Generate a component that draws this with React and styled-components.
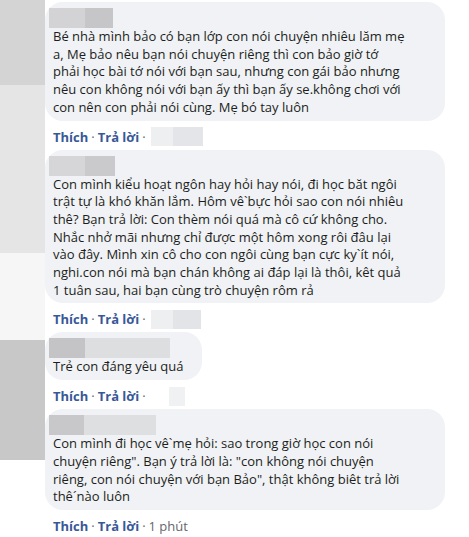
import React from 'react';
import styled, { createGlobalStyle } from 'styled-components';

const GlobalStyle = createGlobalStyle`
  html, body {
    margin: 0;
    padding: 0;
    background: #ffffff;
  }
`;

const Page = styled.div`
  display: flex;
  width: 469px;
  height: 537px;
  overflow: hidden;
  background: #ffffff;
  font-family: 'Open Sans', 'Noto Sans', sans-serif;
`;

// blurred avatar column on the left
const AvatarStrip = styled.div`
  display: flex;
  flex-direction: column;
  width: 45px;
  flex-shrink: 0;
`;

const Tile = styled.div`
  height: ${(p) => p.$h}px;
  width: ${(p) => (p.$w ? `${p.$w}px` : '100%')};
  background: ${(p) => p.$c};
  flex-shrink: 0;
`;

const Thread = styled.div`
  display: flex;
  flex-direction: column;
  align-items: flex-start;
  padding-top: 2px;
`;

const Comment = styled.div`
  display: flex;
  flex-direction: column;
  align-items: flex-start;
`;

const Bubble = styled.div`
  background: #f0f2f5;
  border-radius: 18px;
  padding: 6px 8px 4px;
  width: ${(p) => p.$w}px;
  box-sizing: border-box;
`;

const Author = styled.div`
  display: flex;
  height: 20px;
  margin-left: -4px;
`;

const Body = styled.div`
  font-size: 13px;
  line-height: 17.7px;
  color: #1c1e21;
  white-space: nowrap;
`;

const Actions = styled.div`
  display: flex;
  align-items: center;
  height: 16px;
  margin: 8px 0 5px 8px;
  font-size: 13px;
  font-weight: 700;
  color: #385898;
`;

const Dot = styled.span`
  color: #65676b;
  font-weight: 400;
  margin: 0 3px;
`;

const Time = styled.span`
  color: #65676b;
  font-weight: 400;
`;

const Blur = styled.div`
  display: flex;
  height: 19px;
  margin-left: ${(p) => p.$offset || 2}px;
`;

const comments = [
  {
    width: 400,
    author: [
      [36, '#d3d3d5'],
      [28, '#c6c6c8'],
    ],
    lines: [
      'Bé nhà mình bảo có bạn lớp con nói chuyện nhiêu lăm mẹ',
      'a, Mẹ bảo nêu bạn nói chuyện riêng thì con bảo giờ tớ',
      'phải học bài tớ nói với bạn sau, nhưng con gái bảo nhưng',
      'nêu con không nói với bạn ấy thì bạn ấy se.không chơi với',
      'con nên con phải nói cùng. Mẹ bó tay luôn',
    ],
    blur: [
      [22, '#eeeff1'],
      [30, '#e3e5e8'],
    ],
  },
  {
    width: 400,
    author: [
      [36, '#d6d6d8'],
      [30, '#cacacc'],
    ],
    lines: [
      'Con mình kiểu hoạt ngôn hay hỏi hay nói, đi học băt ngôi',
      'trật tự là khó khăn lắm. Hôm vê`bực hỏi sao con nói nhiêu',
      'thê? Bạn trả lời: Con thèm nói quá mà cô cứ không cho.',
      'Nhắc nhở mãi nhưng chỉ được một hôm xong rôi đâu lại',
      'vào đây. Mình xin cô cho con ngôi cùng bạn cực ky`ít nói,',
      'nghi.con nói mà bạn chán không ai đáp lại là thôi, kêt quả',
      '1 tuân sau, hai bạn cùng trò chuyện rôm rả',
    ],
    blur: [
      [22, '#eeeff1'],
      [28, '#e2e4e7'],
    ],
  },
  {
    width: 157,
    author: [
      [36, '#c4c4c6'],
      [85, '#dddee0'],
    ],
    lines: ['Trẻ con đáng yêu quá'],
    blur: [[16, '#f0f1f3']],
    blurOffset: 20,
  },
  {
    width: 400,
    author: [
      [35, '#c8c8ca'],
      [72, '#dedfe1'],
    ],
    lines: [
      'Con mình đi học vê`mẹ hỏi: sao trong giờ học con nói',
      'chuyện riêng". Bạn ý trả lời là: "con không nói chuyện',
      'riêng, con nói chuyện với bạn Bảo", thật không biêt trả lời',
      'thê´nào luôn',
    ],
    time: '1 phút',
  },
];

export default function App() {
  return (
    <>
      <GlobalStyle />
      <Page>
        <AvatarStrip>
          <Tile $h={85} $c="#d4d4d4" />
          <Tile $h={168} $c="#e5e5e5" />
          <Tile $h={87} $c="#f6f6f6" />
          <Tile $h={120} $c="#c8c8c8" />
          <Tile $h={77} $c="#ffffff" />
        </AvatarStrip>
        <Thread>
          {comments.map((c, i) => (
            <Comment key={i}>
              <Bubble $w={c.width}>
                <Author>
                  {c.author.map(([w, col], j) => (
                    <Tile key={j} $w={w} $h={20} $c={col} />
                  ))}
                </Author>
                <Body>
                  {c.lines.map((l, j) => (
                    <div key={j}>{l}</div>
                  ))}
                </Body>
              </Bubble>
              <Actions>
                <span>Thích</span>
                <Dot>·</Dot>
                <span>Trả lời</span>
                <Dot>·</Dot>
                {c.time ? (
                  <Time>{c.time}</Time>
                ) : (
                  <Blur $offset={c.blurOffset}>
                    {c.blur.map(([w, col], j) => (
                      <Tile key={j} $w={w} $h={19} $c={col} />
                    ))}
                  </Blur>
                )}
              </Actions>
            </Comment>
          ))}
        </Thread>
      </Page>
    </>
  );
}
